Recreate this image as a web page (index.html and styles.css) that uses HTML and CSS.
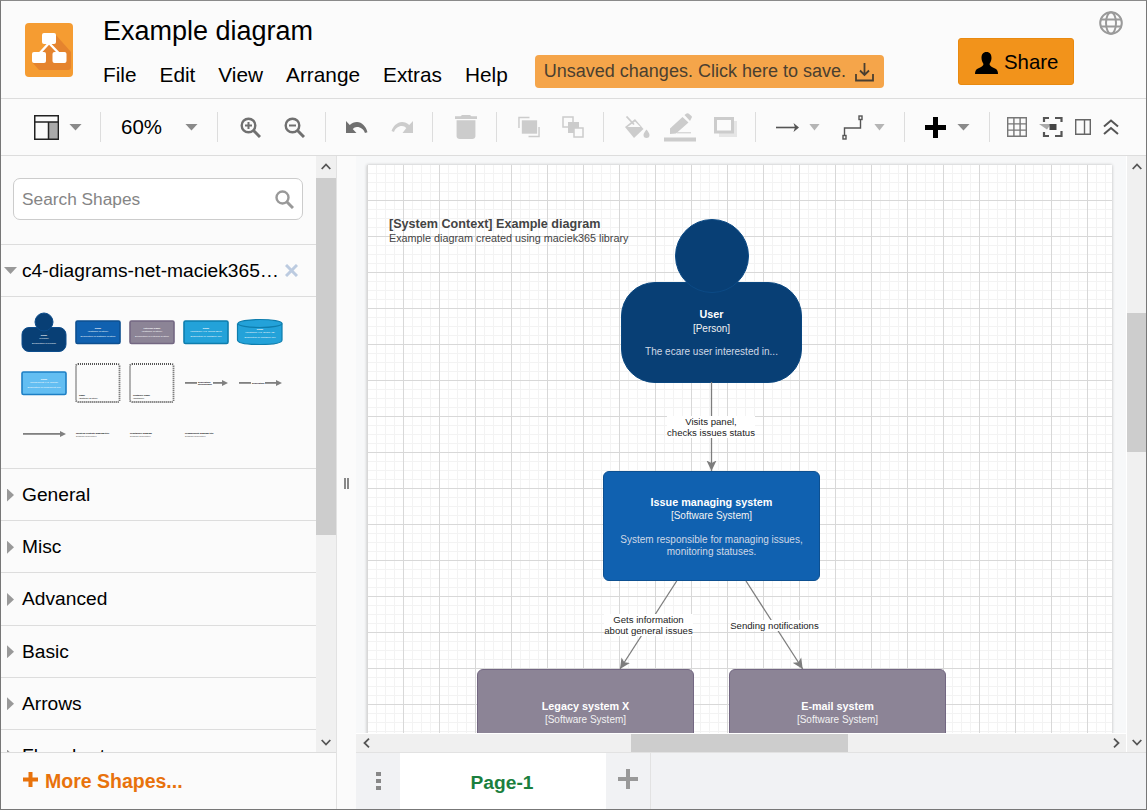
FILE: index.html
```html
<!DOCTYPE html>
<html lang="en">
<head>
  <meta charset="UTF-8">
  <title>Example diagram</title>
  <link rel="stylesheet" href="styles.css">
</head>
<body>
<div class="app">

  <header class="header">
    <svg class="logo" width="48" height="54" viewBox="0 0 48 54">
      <rect width="48" height="54" rx="4" fill="#f59c32"/>
      <path d="M30 11 46 29V44Q46 47 43 47H14L7 39Z" fill="#e5842e"/>
      <path d="M24 20 14 31M24 20 34.500 31" stroke="#fff" stroke-width="2.500"/>
      <rect x="17" y="10" width="14" height="11" rx="2" fill="#fff"/>
      <rect x="7" y="29" width="14" height="11" rx="2" fill="#fff"/>
      <rect x="27.500" y="29" width="14" height="11" rx="2" fill="#fff"/>
    </svg>
    <div class="header-main">
      <div class="doc-title">Example diagram</div>
      <div class="menu-row">
        <nav class="menu">
          <span>File</span><span>Edit</span><span>View</span><span>Arrange</span><span>Extras</span><span>Help</span>
        </nav>
        <div class="save-note">
          <span>Unsaved changes. Click here to save.</span>
          <svg width="19" height="20" viewBox="0 0 19 20" fill="none" stroke="#4a3f30" stroke-width="1.800">
            <path d="M9.500 1V13M5 8.500 9.500 13 14 8.500M1 12V18.500H18V12"/>
          </svg>
        </div>
      </div>
    </div>
    <button class="share">
      <svg width="23" height="24" viewBox="0 0 23 24">
        <path d="M11.500 1C8 1 6.500 3.500 6.500 7 6.500 10 8 12 8.500 13 8.500 15 6 16 3 17.500 1 18.500 0 20 0 23H23C23 20 22 18.500 20 17.500 17 16 14.500 15 14.500 13 15 12 16.500 10 16.500 7 16.500 3.500 15 1 11.500 1Z"/>
      </svg>
      Share
    </button>
    <svg class="globe" width="24" height="24" viewBox="0 0 24 24" fill="none" stroke="#9a9a9a" stroke-width="2">
      <circle cx="12" cy="12" r="10.800"/>
      <ellipse cx="12" cy="12" rx="5" ry="10.800"/>
      <path d="M1.500 8.500H22.500M1.500 15.500H22.500"/>
    </svg>
  </header>

  <div class="toolbar">
    <div class="tb-group first">
      <div class="pair">
        <svg width="25" height="25" viewBox="0 0 25 25">
          <rect x="14.500" y="7" width="9" height="17" fill="#aaa"/>
          <path d="M.750.750H24.250V24.250H.750ZM.750 7H24.250M14.500 7V24.250" fill="none" stroke="#222" stroke-width="1.500"/>
        </svg>
        <i class="caret"></i>
      </div>
    </div>
    <div class="tb-group gap-zoom">
      <span class="zoom-value">60%</span>
      <i class="caret"></i>
    </div>
    <div class="tb-group pad-zoom">
      <svg width="21" height="21" viewBox="0 0 21 21" fill="none" stroke="#707070">
        <circle cx="8.500" cy="8.500" r="6.800" stroke-width="2.400"/>
        <path d="M8.500 5V12M5 8.500H12" stroke-width="2"/>
        <path d="M13.500 13.500 20 20" stroke-width="3"/>
      </svg>
      <svg width="21" height="21" viewBox="0 0 21 21" fill="none" stroke="#707070">
        <circle cx="8.500" cy="8.500" r="6.800" stroke-width="2.400"/>
        <path d="M5 8.500H12" stroke-width="2"/>
        <path d="M13.500 13.500 20 20" stroke-width="3"/>
      </svg>
    </div>
    <div class="tb-group">
      <svg width="22" height="12" viewBox="2 6 21 11" fill="#707070" preserveAspectRatio="none">
        <path d="M12.500 7c-2.650 0-5.050.99-6.900 2.600L2 6v11h10l-3.620-3.620c1.390-1.160 2.160-1.880 4.120-1.880 3.540 0 6.550 2.310 7.600 5.500l2.370-.78C21.080 11.030 17.150 7 12.500 7z"/>
      </svg>
      <svg width="22" height="12" viewBox="1 6 21 11" fill="#ccc" preserveAspectRatio="none">
        <path d="M18.400 9.600C16.550 7.990 14.150 7 11.500 7c-4.650 0-8.580 4.030-9.960 8.220L3.900 16c1.050-3.190 4.050-5.500 7.600-5.500 1.950 0 2.730.72 4.120 1.880L12 17h10V6l-3.600 3.600z"/>
      </svg>
    </div>
    <div class="tb-group pad-left-22">
      <svg width="22" height="24" viewBox="5 3 14 18" fill="#ccc" preserveAspectRatio="none">
        <path d="M6 19c0 1.100.9 2 2 2h8c1.100 0 2-.9 2-2V7H6v12zM19 4h-3.500l-1-1h-5l-1 1H5v2h14V4z"/>
      </svg>
    </div>
    <div class="tb-group pad-left-21">
      <svg width="22" height="22" viewBox="0 0 23 22" fill="none" stroke="#ccc" stroke-width="1.500">
        <rect x="4" y="4" width="16" height="14" fill="#ccc" stroke="none"/>
        <path d="M1 12V1H12M11 21H22V11"/>
      </svg>
      <svg width="22" height="22" viewBox="0 0 22 22" stroke="#ccc" stroke-width="1.500">
        <rect x="1" y="1" width="10" height="10" fill="#fbfbfb"/>
        <rect x="6" y="6" width="11" height="11" fill="#ccc" stroke="none"/>
        <rect x="12" y="12" width="9" height="9" fill="#fbfbfb"/>
      </svg>
    </div>
    <div class="tb-group gap-style pad-right-18">
      <svg class="fill-icon" width="26" height="23" viewBox="0 0 26 23">
        <path d="M11 3 1 11 10 22 19.500 13Z" fill="#ccc"/>
        <path d="M11 5.500 3.500 11H16.500Z" fill="#fbfbfb"/>
        <path d="M2.500.500 10 8.500" stroke="#ccc" stroke-width="1.800" fill="none"/>
        <path d="M22.500 13.500S19.500 17 19.500 19A3 3 0 0 0 25.500 19C25.500 17 22.500 13.500 22.500 13.500Z" fill="#ccc"/>
      </svg>
      <svg width="32" height="29" viewBox="0 0 32 29" fill="#ccc">
        <path d="M18.500 4 24.500 9.500 12 20.500 6 21V15.500ZM20.500 2 22.500.5Q23.500 0 24.500.5L27.500 3Q28.500 4 27.500 5L26 8Z"/>
        <rect y="24.500" width="32" height="4"/>
        <rect x="13" y="19" width="14" height="1.400" fill="#d8d8d8"/>
      </svg>
      <svg class="shadow-icon" width="23" height="20" viewBox="0 0 23 20">
        <rect x="5" y="4" width="18" height="16" fill="#e6e6e6"/>
        <rect x="1.500" y="1.500" width="17" height="13.500" fill="#fbfbfb" stroke="#ccc" stroke-width="3"/>
      </svg>
    </div>
    <div class="tb-group gap-conn">
      <div class="pair">
        <svg width="23" height="11" viewBox="0 0 23 11" fill="#555">
          <rect y="4.700" width="20" height="1.600"/>
          <path d="M17.500 1 23 5.500 17.500 10 19 5.500Z"/>
        </svg>
        <i class="caret small"></i>
      </div>
      <div class="pair">
        <svg width="22" height="25" viewBox="0 0 22 25" fill="none" stroke="#555" stroke-width="1.400">
          <path d="M2.500 20V13H18.500V5"/>
          <rect x="1" y="20.500" width="3" height="3.500" fill="#fbfbfb"/>
          <rect x="17" y="1" width="3" height="3.500" fill="#fbfbfb"/>
        </svg>
        <i class="caret small"></i>
      </div>
    </div>
    <div class="tb-group">
      <div class="pair wide">
        <svg width="21" height="21" viewBox="0 0 21 21" fill="#000">
          <rect x="8" width="5" height="21"/>
          <rect y="8" width="21" height="5"/>
        </svg>
        <i class="caret"></i>
      </div>
    </div>
    <div class="tb-group last gap-view">
      <svg width="20" height="20" viewBox="0 0 20 20" fill="none" stroke="#777" stroke-width="1.400">
        <path d="M.7.7H19.300V19.300H.7ZM.7 6.900H19.300M.7 13.100H19.300M6.900.7V19.300M13.100.7V19.300"/>
      </svg>
      <svg width="24" height="20" viewBox="0 0 24 20">
        <path d="M0 7H12L8 12.500Z" fill="#aaa"/>
        <path d="M5 5V1H10M16 1H22.500V5M22.500 14V19H16M10 19H5V15" fill="none" stroke="#555" stroke-width="2.200"/>
        <rect x="10.500" y="7" width="7" height="6" fill="#444"/>
      </svg>
      <svg width="16" height="16" viewBox="0 0 16 16" fill="none" stroke="#666" stroke-width="1.400">
        <path d="M.7.7H15.300V15.300H.7ZM9.500.7V15.300"/>
      </svg>
      <svg width="16" height="16" viewBox="0 0 16 16" fill="none" stroke="#555" stroke-width="2">
        <path d="M1 7.500 8 1.500 15 7.500M1 15 8 9 15 15"/>
      </svg>
    </div>
  </div>

  <div class="main">
    <aside class="sidebar">
      <div class="side-scroll">
        <div class="side-list">
          <div class="search-wrap">
            <div class="search">
              <input type="text" placeholder="Search Shapes">
              <svg width="19" height="19" viewBox="0 0 19 19" fill="none" stroke="#999">
                <circle cx="7.500" cy="7.500" r="6" stroke-width="2.400"/>
                <path d="M12 12 18 18" stroke-width="3"/>
              </svg>
            </div>
          </div>
          <div class="section open">
            <i class="tri-down"></i>
            <span class="section-name">c4-diagrams-net-maciek365-library</span>
            <svg width="13" height="13" viewBox="0 0 13 13" stroke="#bccbe0" stroke-width="3">
              <path d="M1 1 12 12M12 1 1 12"/>
            </svg>
          </div>
          <div class="palette">
            <svg width="314" height="171" viewBox="1 297 314 171">
              <g class="thumb-text">
                <rect x="22" y="327.500" width="44" height="24" rx="7" fill="#083f75" stroke="#0d4d8c"/>
                <circle cx="44" cy="322" r="9" fill="#083f75" stroke="#0d4d8c"/>
                <text x="44" y="335.500" font-weight="bold">name</text>
                <text x="44" y="338.500">[Person]</text>
                <text x="44" y="344">Description of Person</text>

                <rect x="76" y="321" width="44" height="22.500" rx="1.500" fill="#1061b0" stroke="#0d4f90" stroke-width="1.600"/>
                <text x="98" y="329" font-weight="bold">name</text>
                <text x="98" y="331.500">[Software System]</text>
                <text x="98" y="336.500">Description of Software System</text>

                <rect x="130" y="321" width="44" height="22.500" rx="1.500" fill="#8c8496" stroke="#736782" stroke-width="1.600"/>
                <text x="152" y="329" font-weight="bold">external name</text>
                <text x="152" y="331.500">[Software System]</text>
                <text x="152" y="336.500">Description of external System</text>

                <rect x="184" y="321" width="44" height="22.500" rx="1.500" fill="#23a2d9" stroke="#0e7dad" stroke-width="1.600"/>
                <text x="206" y="329" font-weight="bold">name</text>
                <text x="206" y="331.500">[Container: e.g. Spring Boot]</text>
                <text x="206" y="336.500">Description of container role</text>

                <path d="M237.500 323.500V340Q237.500 344.500 260 344.500 282 344.500 282 340V323.500" fill="#23a2d9" stroke="#0e7dad" stroke-width="1.200"/>
                <ellipse cx="260" cy="323.500" rx="22" ry="4" fill="#23a2d9" stroke="#0e7dad" stroke-width="1.200"/>
                <text x="260" y="330" font-weight="bold">name</text>
                <text x="260" y="332.500">[Container: e.g. Oracle 12]</text>
                <text x="260" y="338">Description of container role</text>

                <rect x="22" y="372" width="44" height="22.500" rx="1.500" fill="#63bef2" stroke="#1d7fc4" stroke-width="1.600"/>
                <text x="44" y="380" font-weight="bold">name</text>
                <text x="44" y="382.500">[Component: e.g. Spring]</text>
                <text x="44" y="387.500">Description of component role</text>
              </g>
              <rect x="76" y="364" width="43.500" height="38" rx="2" fill="none" stroke="#555" stroke-width="1.800" stroke-dasharray="1 1"/>
              <rect x="130" y="364" width="43.500" height="38" rx="2" fill="none" stroke="#555" stroke-width="1.800" stroke-dasharray="1 1"/>
              <g class="thumb-small">
                <text x="79" y="396" font-weight="bold">name</text>
                <text x="79" y="399">[Software System]</text>
                <text x="133" y="396" font-weight="bold">container name</text>
                <text x="133" y="399">[Container]</text>
                <text x="185" y="434" font-weight="bold">[Component] diagram title</text>
                <text x="185" y="436.500" fill="#555">Diagram description</text>
                <text x="76" y="433.500" font-weight="bold">[System Context] diagram title</text>
                <text x="76" y="436.500" fill="#555">Diagram description</text>
                <text x="130" y="433.500" font-weight="bold">[Container] diagram</text>
                <text x="130" y="436.500" fill="#555">Diagram description</text>
              </g>
              <g fill="#808080">
                <rect x="185" y="382" width="40" height="1.800"/><path d="M222 380 228 383 222 386Z"/>
                <rect x="239" y="382" width="40" height="1.800"/><path d="M276 380 282 383 276 386Z"/>
                <rect x="23" y="433" width="40" height="1.800"/><path d="M60 431 66 434 60 437Z"/>
              </g>
              <rect x="197" y="380.500" width="16" height="5" fill="#fbfbfb"/>
              <rect x="251" y="381" width="14" height="3.500" fill="#fbfbfb"/>
              <g class="thumb-small">
                <text x="198" y="382.500" font-weight="bold">description</text>
                <text x="198" y="385" font-weight="bold">[technology]</text>
                <text x="252" y="384" font-weight="bold">description</text>
              </g>
            </svg>
          </div>
          <div class="section"><i class="tri-right"></i><span class="section-name">General</span></div>
          <div class="section"><i class="tri-right"></i><span class="section-name">Misc</span></div>
          <div class="section"><i class="tri-right"></i><span class="section-name">Advanced</span></div>
          <div class="section"><i class="tri-right"></i><span class="section-name">Basic</span></div>
          <div class="section"><i class="tri-right"></i><span class="section-name">Arrows</span></div>
          <div class="section"><i class="tri-right"></i><span class="section-name">Flowchart</span></div>
        </div>
        <div class="vbar">
          <div class="sb-btn"><svg width="10" height="7" viewBox="0 0 10 7" fill="none" stroke="#555" stroke-width="1.800"><path d="M.7 6 5 1.500 9.300 6"/></svg></div>
          <div class="vbar-track"><div class="thumb side-thumb"></div></div>
          <div class="sb-btn"><svg width="10" height="7" viewBox="0 0 10 7" fill="none" stroke="#555" stroke-width="1.800"><path d="M.7 1 5 5.500 9.300 1"/></svg></div>
        </div>
      </div>
      <div class="more-shapes">
        <svg class="more-plus" width="15" height="15" viewBox="0 0 15 15" fill="#e8720c">
          <rect x="5.500" width="4" height="15"/>
          <rect y="5.500" width="15" height="4"/>
        </svg>
        More Shapes...
      </div>
    </aside>

    <div class="splitter"><span class="grip"></span></div>

    <div class="work">
      <div class="work-top">
        <div class="view-col">
          <div class="view">
            <div class="page">
              <div class="diagram-title">
                <b>[System Context] Example diagram</b>
                <span>Example diagram created using maciek365 library</span>
              </div>

              <div class="node person-body">
                <b>User</b>
                <span>[Person]</span>
                <em>The ecare user interested in...</em>
              </div>
              <div class="person-head"></div>

              <div class="node system">
                <b>Issue managing system</b>
                <span>[Software System]</span>
                <em>System responsible for managing issues,<br>monitoring statuses.</em>
              </div>
              <div class="node external legacy">
                <b>Legacy system X</b>
                <span>[Software System]</span>
              </div>
              <div class="node external email">
                <b>E-mail system</b>
                <span>[Software System]</span>
              </div>

              <svg class="edges" width="745" height="560">
                <defs>
                  <marker id="head" markerUnits="userSpaceOnUse" markerWidth="11" markerHeight="11" refX="10.500" refY="5.500" orient="auto">
                    <path d="M0 .5 10.500 5.500 0 10.500 2.500 5.500Z" fill="#7d7d7d"/>
                  </marker>
                </defs>
                <g stroke="#7d7d7d" stroke-width="1.300" fill="none">
                  <path d="M344.500 217V306" marker-end="url(#head)"/>
                  <path d="M309.700 416 253 504" marker-end="url(#head)"/>
                  <path d="M379 416 435.700 504" marker-end="url(#head)"/>
                </g>
              </svg>

              <div class="edge-label label-visits">Visits panel,<br>checks issues status</div>
              <div class="edge-label label-gets">Gets information<br>about general issues</div>
              <div class="edge-label label-send">Sending notifications</div>
            </div>
          </div>
          <div class="hbar">
            <div class="sb-btn"><svg width="7" height="10" viewBox="0 0 7 10" fill="none" stroke="#555" stroke-width="1.800"><path d="M6 .7 1.500 5 6 9.300"/></svg></div>
            <div class="hbar-track"><div class="thumb view-hthumb"></div></div>
            <div class="sb-btn"><svg width="7" height="10" viewBox="0 0 7 10" fill="none" stroke="#555" stroke-width="1.800"><path d="M1 .7 5.500 5 1 9.300"/></svg></div>
          </div>
        </div>
        <div class="vbar view-vbar">
          <div class="sb-btn"><svg width="10" height="7" viewBox="0 0 10 7" fill="none" stroke="#555" stroke-width="1.800"><path d="M.7 6 5 1.500 9.300 6"/></svg></div>
          <div class="vbar-track"><div class="thumb view-vthumb"></div></div>
          <div class="sb-btn"><svg width="10" height="7" viewBox="0 0 10 7" fill="none" stroke="#555" stroke-width="1.800"><path d="M.7 1 5 5.500 9.300 1"/></svg></div>
        </div>
      </div>
      <div class="tabs">
        <div class="tab-menu"><i></i><i></i><i></i></div>
        <div class="tab">Page-1</div>
        <div class="tab-add">
          <svg width="20" height="20" viewBox="0 0 20 20" fill="#999">
            <rect x="8" width="4" height="20"/>
            <rect y="8" width="20" height="4"/>
          </svg>
        </div>
      </div>
    </div>
  </div>

</div>
</body>
</html>
```
FILE: styles.css
```css
* {
  box-sizing: border-box;
}

body {
  margin: 0;
  font-family: "Liberation Sans", Arial, sans-serif;
  color: #000;
  background: #fff;
}

.app {
  width: 1147px;
  height: 810px;
  display: flex;
  flex-direction: column;
  border: 1px solid #777;
  border-top-color: #8a8a8a;
  overflow: hidden;
  background: #fbfbfb;
}

/* header */
.header {
  height: 98px;
  flex: none;
  display: flex;
  align-items: flex-start;
  border-bottom: 1px solid #ddd;
}

.logo {
  margin: 22px 0 0 24px;
  flex: none;
}

.header-main {
  margin-left: 30px;
  flex: 1;
}

.doc-title {
  font-size: 27px;
  line-height: 32px;
  margin-top: 14px;
}

.menu-row {
  display: flex;
  align-items: flex-start;
  margin-top: 8px;
}

.menu {
  display: flex;
  gap: 23px;
  margin-top: 3px;
  font-size: 20.800px;
  line-height: 33px;
}

.save-note {
  display: flex;
  align-items: center;
  gap: 9px;
  height: 33px;
  width: 349px;
  margin-left: 27px;
  padding-left: 9px;
  background: #f5a54a;
  border-radius: 4px;
  color: #4a3f30;
  font-size: 18px;
}

.share {
  display: flex;
  align-items: center;
  gap: 6px;
  width: 116px;
  height: 47px;
  margin-top: 37px;
  padding: 2px 0 0 16px;
  background: #f2931b;
  border: 1px solid #e98a10;
  border-radius: 3px;
  font-family: inherit;
  font-size: 20.400px;
  color: #000;
}

.globe {
  margin: 10px 23px 0 25px;
  flex: none;
}

/* toolbar */
.toolbar {
  height: 57px;
  flex: none;
  display: flex;
  align-items: center;
  padding-left: 13px;
  border-bottom: 1px solid #ddd;
}

.tb-group {
  display: flex;
  align-items: center;
  gap: 23px;
  height: 30px;
  padding: 0 19px 0 20px;
  border-right: 1px solid #ddd;
}

.tb-group.first {
  padding-right: 18px;
}

.tb-group.pad-zoom {
  padding: 0 20px 0 22px;
}

.tb-group.pad-left-22 {
  padding-left: 22px;
}

.tb-group.pad-left-21 {
  padding-left: 21px;
  gap: 22px;
}

.tb-group.pad-right-18 {
  padding-right: 18px;
}

.tb-group.last {
  border-right: 0;
  padding-left: 17px;
}

.pair {
  display: flex;
  align-items: center;
  gap: 10px;
}

.pair.wide {
  gap: 11px;
}

.gap-zoom {
  gap: 23px;
}

.gap-style {
  gap: 15px;
}

.fill-icon {
  margin-right: -1px;
}

.shadow-icon {
  margin-left: 3px;
}

.gap-conn {
  gap: 22px;
}

.gap-view {
  gap: 12px;
}

.zoom-value {
  font-size: 20.480px;
}

.caret {
  width: 13px;
  height: 7px;
  flex: none;
  background: #8a8a8a;
  clip-path: polygon(0 0, 100% 0, 50% 100%);
}

.caret.small {
  width: 11px;
  background: #b5b5b5;
}

/* main area */
.main {
  flex: 1;
  min-height: 0;
  display: flex;
}

.sidebar {
  width: 336px;
  flex: none;
  display: flex;
  flex-direction: column;
  border-right: 1px solid #e2e2e2;
}

.side-scroll {
  flex: 1;
  min-height: 0;
  display: flex;
}

.side-list {
  flex: 1;
  min-width: 0;
  overflow: hidden;
}

.search-wrap {
  height: 89px;
  padding: 22px 13px 0 12px;
  border-bottom: 1px solid #ddd;
}

.search {
  display: flex;
  align-items: center;
  height: 42px;
  padding: 0 8px 0 8px;
  background: #fff;
  border: 1px solid #ccc;
  border-radius: 7px;
}

.search input {
  flex: 1;
  min-width: 0;
  border: 0;
  outline: 0;
  padding: 0;
  background: transparent;
  font-family: inherit;
  font-size: 17.300px;
}

.search input::placeholder {
  color: #858585;
}

.section {
  display: flex;
  align-items: center;
  height: 52.200px;
  padding: 1px 0 0 6px;
  border-bottom: 1px solid #ddd;
  font-size: 19.200px;
}

.section.open {
  height: 52px;
  padding: 0 0 0 3px;
}

.section-name {
  white-space: nowrap;
}

.open .section-name {
  width: 261px;
  overflow: hidden;
  text-overflow: ellipsis;
  margin-right: 2px;
}

.tri-right {
  width: 7px;
  height: 13px;
  flex: none;
  margin-right: 8px;
  background: #999;
  clip-path: polygon(0 0, 100% 50%, 0 100%);
}

.tri-down {
  width: 13px;
  height: 7px;
  flex: none;
  margin-right: 5px;
  background: #999;
  clip-path: polygon(0 0, 100% 0, 50% 100%);
}

.palette {
  height: 172px;
  border-bottom: 1px solid #ddd;
}

.palette svg {
  display: block;
}

.thumb-text text {
  fill: #fff;
  font-size: 2.500px;
  text-anchor: middle;
}

.thumb-small text {
  font-size: 2.300px;
}

/* scrollbars */
.vbar {
  width: 20px;
  flex: none;
  display: flex;
  flex-direction: column;
  background: #f0f0f0;
}

.vbar-track {
  flex: 1;
  min-height: 0;
}

.hbar-track {
  flex: 1;
}

.sb-btn {
  flex: none;
  width: 20px;
  height: 20px;
  display: flex;
  align-items: center;
  justify-content: center;
  background: #f0f0f0;
}

.thumb {
  background: #cdcdcd;
}

.side-thumb {
  height: 357px;
  margin-top: 2px;
}

.view-vbar {
  width: 20px;
  border-left: 1px solid #fff;
}

.view-vthumb {
  height: 139px;
  margin-top: 137px;
}

.hbar {
  height: 19px;
  flex: none;
  display: flex;
  background: #f0f0f0;
  border-top: 1px solid #fff;
}

.hbar .sb-btn {
  height: 18px;
}

.view-hthumb {
  width: 217px;
  height: 100%;
  margin-left: 255px;
}

.more-shapes {
  height: 57px;
  flex: none;
  display: flex;
  align-items: center;
  gap: 7px;
  padding: 1px 0 0 22px;
  border-top: 1px solid #ddd;
  color: #e8720c;
  font-size: 19.500px;
  font-weight: bold;
}

.more-plus {
  margin-top: -5px;
}

.splitter {
  width: 19px;
  flex: none;
  position: relative;
  background: #fbfbfb;
}

.grip {
  position: absolute;
  left: 7px;
  top: 322px;
  width: 5px;
  height: 11px;
  border-left: 2px solid #888;
  border-right: 2px solid #888;
}

.work {
  flex: 1;
  min-width: 0;
  display: flex;
  flex-direction: column;
}

.work-top {
  flex: 1;
  min-height: 0;
  display: flex;
}

.view-col {
  flex: 1;
  min-width: 0;
  display: flex;
  flex-direction: column;
}

.view {
  flex: 1;
  min-height: 0;
  position: relative;
  overflow: hidden;
  background: #f7f8f9;
}

/* diagram page */
.page {
  position: absolute;
  left: 11px;
  top: 9px;
  width: 745px;
  height: 800px;
  box-shadow: 0 0 3px rgba(0, 0, 0, 0.25);
  background-color: #fff;
  background-image:
    linear-gradient(#d8d8d8 1px, transparent 1px),
    linear-gradient(90deg, #d8d8d8 1px, transparent 1px),
    linear-gradient(#f3f3f3 1px, transparent 1px),
    linear-gradient(90deg, #f3f3f3 1px, transparent 1px);
  background-size: 36px 36px, 36px 36px, 9px 9px, 9px 9px;
  background-position: 0 35px, 0 0, 0 8px, 0 0;
}

.diagram-title {
  position: absolute;
  left: 22px;
  top: 52px;
  color: #444;
  font-size: 10.800px;
  line-height: 13px;
}

.diagram-title b {
  display: block;
  font-size: 12.600px;
  line-height: 15px;
}

.diagram-title span {
  display: block;
}

.node {
  position: absolute;
  text-align: center;
  color: #fff;
  font-size: 10px;
  line-height: 12px;
}

.node b {
  display: block;
  margin-bottom: 1px;
  font-size: 10.800px;
  line-height: 14px;
}

.node span {
  display: block;
  color: #f2f2f2;
}

.node em {
  display: block;
  font-style: normal;
  color: #cfd8e6;
  margin-top: 12px;
}

.person-body {
  left: 254px;
  top: 117px;
  width: 181px;
  height: 101px;
  padding-top: 24px;
  background: #083f75;
  border: 1px solid #0a4780;
  border-radius: 34px;
}

.person-body b {
  margin-bottom: 2px;
}

.person-body em {
  margin-top: 11px;
}

.person-head {
  position: absolute;
  left: 308px;
  top: 54px;
  width: 74px;
  height: 74px;
  background: #083f75;
  border: 1px solid #0c4a85;
  border-radius: 50%;
}

.system {
  left: 236px;
  top: 306px;
  width: 217px;
  height: 110px;
  padding-top: 23px;
  background: #1061b0;
  border: 1px solid #0d5091;
  border-radius: 6px;
}

.external {
  top: 504px;
  width: 217px;
  height: 120px;
  padding-top: 29px;
  background: #8c8496;
  border: 1px solid #736782;
  border-radius: 6px;
}

.legacy {
  left: 110px;
}

.email {
  left: 362px;
}

.edges {
  position: absolute;
  left: 0;
  top: 0;
}

.edge-label {
  position: absolute;
  text-align: center;
  background: #fff;
  color: #222;
  font-size: 9.600px;
  line-height: 11.200px;
  white-space: nowrap;
}

.label-visits {
  left: 300px;
  top: 251px;
  width: 88px;
}

.label-gets {
  left: 237px;
  top: 449px;
  width: 89px;
}

.label-send {
  left: 363px;
  top: 455px;
  width: 89px;
}

/* tabs */
.tabs {
  height: 57px;
  flex: none;
  display: flex;
  background: #f1f2f4;
  border-top: 1px solid #e2e2e2;
}

.tab-menu {
  width: 44px;
  display: flex;
  flex-direction: column;
  align-items: center;
  justify-content: center;
  gap: 2.500px;
}

.tab-menu i {
  width: 5px;
  height: 4.500px;
  background: #888;
}

.tab {
  width: 206px;
  display: flex;
  align-items: center;
  justify-content: center;
  padding: 3px 2px 0 0;
  background: #fff;
  color: #1b7f3e;
  font-size: 19.200px;
  font-weight: bold;
}

.tab-add {
  width: 45px;
  display: flex;
  align-items: center;
  justify-content: center;
  padding-bottom: 4px;
  border-right: 1px solid #e2e2e2;
}
```
